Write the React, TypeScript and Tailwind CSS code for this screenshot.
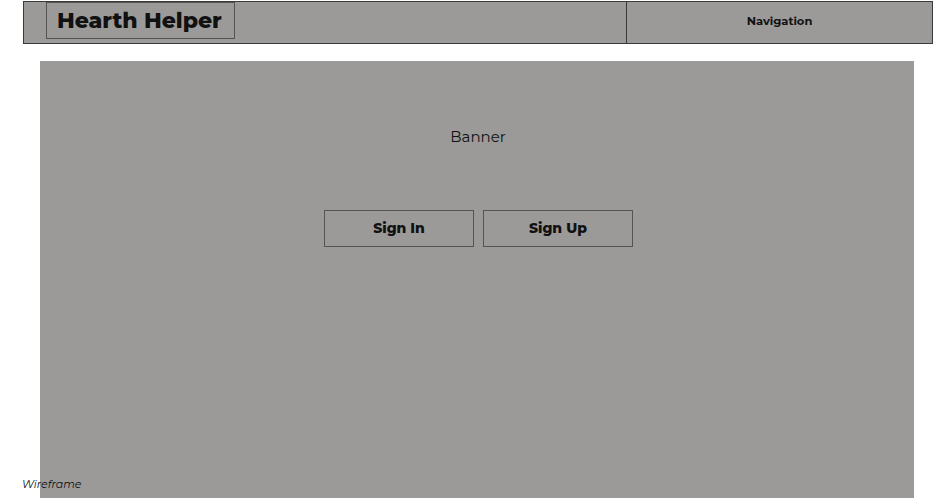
import React from "react";

export default function App() {
  const font = { fontFamily: "Montserrat, Inter, 'Open Sans', sans-serif" };
  return (
    <div className="relative w-[940px] h-[500px] bg-white overflow-hidden" style={font}>
      <div className="pt-[1px] pl-[23px]">
        <header className="flex w-[910px] h-[43px] border border-[#3a3a3a] bg-[#9b9a99]">
          <div className="flex flex-1 items-start pl-[22px]">
            <div className="flex items-center h-[37px] w-[189px] border border-[#555] pl-[10px] text-[22px] font-extrabold text-[#111]">
              Hearth Helper
            </div>
          </div>
          <nav className="flex items-center justify-center w-[306px] border-l border-[#3a3a3a] text-[11.5px] font-bold text-[#111] pb-[2px]">
            Navigation
          </nav>
        </header>
      </div>
      <main className="ml-[40px] mt-[17px] w-[874px] h-[437px] bg-[#9b9a99] flex flex-col items-center">
        <div className="mt-[65px] text-[15px] text-[#111] pl-[2px]">Banner</div>
        <div className="mt-[61px] flex gap-[9px] pl-[3px]">
          <button className="w-[150px] h-[37px] border border-[#555] text-[14px] font-extrabold text-[#111]">
            Sign In
          </button>
          <button className="w-[150px] h-[37px] border border-[#555] text-[14px] font-extrabold text-[#111]">
            Sign Up
          </button>
        </div>
      </main>
      <div className="absolute left-[22px] top-[476px] text-[11px] italic text-[#111]">Wireframe</div>
    </div>
  );
}
